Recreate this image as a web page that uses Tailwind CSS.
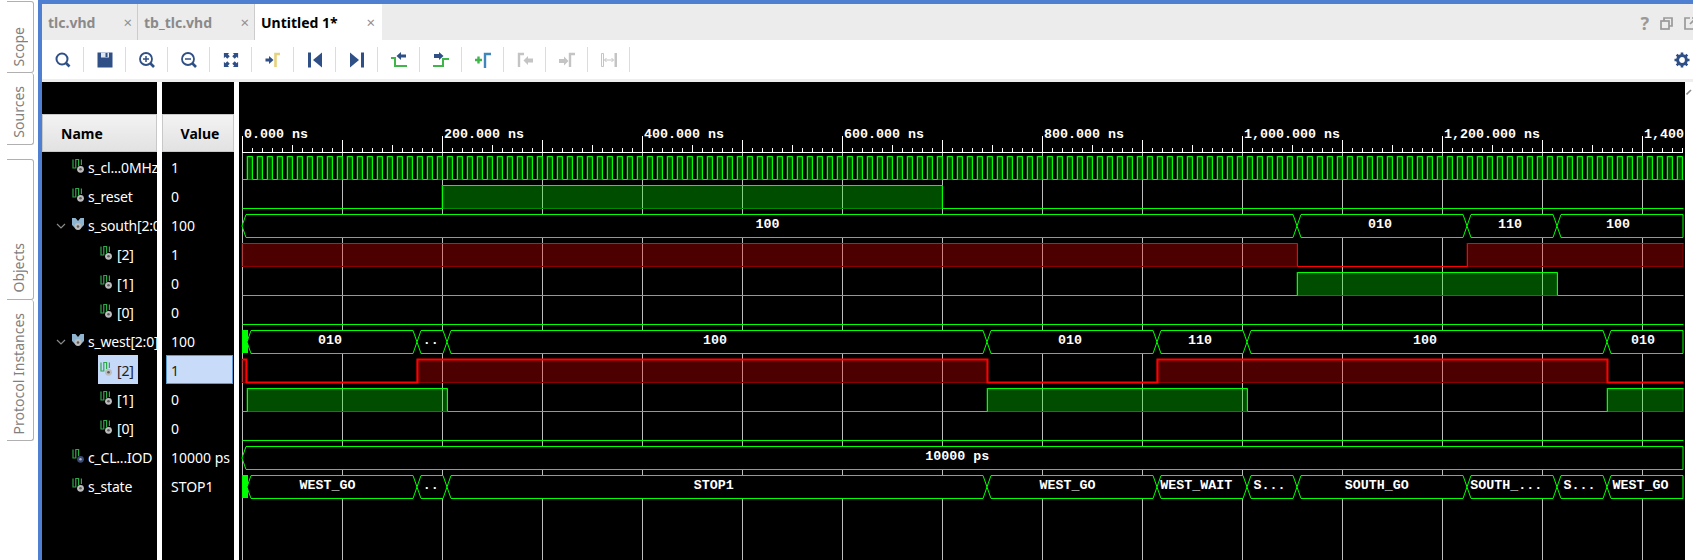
<!DOCTYPE html>
<html lang="en">
<head>
    <meta charset="UTF-8">
    <title>Untitled 1*</title>
    <script src="https://cdn.jsdelivr.net/npm/@tailwindcss/browser@4"></script>
</head>
<body class="bg-white overflow-hidden font-['Noto_Sans',sans-serif]">
    <!-- shared signal icons -->
    <svg class="hidden">
        <symbol id="sig" viewBox="0 0 12 14">
            <path d="M1 0.5V9H3.8V0.5H6.6V7" fill="none" stroke="#2ea84a" stroke-width="1.2"/>
            <path d="M9.4 0.5V6" fill="none" stroke="#2ea84a" stroke-width="1.2"/>
            <circle cx="8.5" cy="10.3" r="3.4" fill="#bdbdbd"/>
            <circle cx="8.5" cy="10.3" r="1.3" fill="#5c5c5c"/>
        </symbol>
        <symbol id="sig-const" viewBox="0 0 12 14">
            <path d="M1 0.5V9H3.8V0.5H6.6V7" fill="none" stroke="#2ea84a" stroke-width="1.2"/>
            <circle cx="8.5" cy="10.3" r="3.4" fill="#3a4a70"/>
            <circle cx="8.5" cy="10.3" r="1.2" fill="#a9b2cc"/>
        </symbol>
        <symbol id="bus" viewBox="0 0 12 14">
            <path d="M0 1H3.5L6 4L8.5 1H12V8L9 11H3L0 8Z" fill="#8fb4cf"/>
            <circle cx="6" cy="9.5" r="3.4" fill="#bdbdbd"/>
            <circle cx="6" cy="9.5" r="1.3" fill="#5c5c5c"/>
        </symbol>
    </svg>

    <div class="flex w-[1693px] h-[560px]">
        <!-- Left vertical tabs -->
        <div class="w-[38px] shrink-0 pt-px pl-[7px] text-[14px] text-[#808080]">
            <div class="w-[27px] h-[72px] flex flex-col justify-end items-center pb-[6px] pr-[2px] border border-l-0 border-[#b0b0b0] rounded-r-[3px]">
                <span class="[writing-mode:vertical-rl] rotate-180 leading-none">Scope</span>
            </div>
            <div class="w-[27px] h-[72px] flex flex-col justify-end items-center pb-[6px] pr-[2px] border border-l-0 border-t-0 border-[#b0b0b0] rounded-r-[3px]">
                <span class="[writing-mode:vertical-rl] rotate-180 leading-none">Sources</span>
            </div>
            <div class="w-[27px] h-[141px] mt-[14px] flex flex-col justify-end items-center pb-[6px] pr-[2px] border border-l-0 border-[#b0b0b0] rounded-r-[3px]">
                <span class="[writing-mode:vertical-rl] rotate-180 leading-none">Objects</span>
            </div>
            <div class="w-[27px] h-[141px] flex flex-col justify-end items-center pb-[6px] pr-[2px] border border-l-0 border-t-0 border-[#b0b0b0] rounded-r-[3px]">
                <span class="[writing-mode:vertical-rl] rotate-180 leading-none whitespace-nowrap">Protocol Instances</span>
            </div>
        </div>

        <!-- Main window -->
        <div class="flex-1 min-w-0 flex flex-col border-t-4 border-l-4 border-[#4e7fd0]">
            <!-- Editor tabs -->
            <div class="h-[36px] shrink-0 flex bg-[#ececec] text-[14px] font-bold overflow-hidden">
                <div class="w-[96px] h-[36px] flex items-center justify-between pl-[6px] pr-[4px] border-r border-[#cccccc] text-[#8a8a8a]">
                    <span>tlc.vhd</span><span class="font-normal text-[15px] text-[#909090] mr-px">×</span>
                </div>
                <div class="w-[117px] h-[36px] flex items-center justify-between pl-[6px] pr-[4px] border-r border-[#cccccc] text-[#8a8a8a]">
                    <span>tb_tlc.vhd</span><span class="font-normal text-[15px] text-[#909090] mr-px">×</span>
                </div>
                <div class="w-[127px] h-[36px] flex items-center justify-between pl-[6px] pr-[6px] bg-white text-black">
                    <span>Untitled 1*</span><span class="font-normal text-[15px] text-[#909090] mr-px">×</span>
                </div>
                <div class="ml-auto flex items-center gap-[11px] -mr-[4px] mt-[2px] text-[#999999]">
                    <span class="text-[18px] font-bold">?</span>
                    <svg width="13" height="13" viewBox="0 0 13 13" fill="none" stroke="#999999" stroke-width="1.7"><path d="M4 4V1H12V9H9"/><rect x="1" y="4" width="8" height="8"/></svg>
                    <svg width="13" height="13" viewBox="0 0 13 13" fill="none" stroke="#999999" stroke-width="1.7"><path d="M6 1H1V12H12V7"/><path d="M6 7L12 1M8 1H12V5"/></svg>
                </div>
            </div>

            <!-- Toolbar -->
            <div class="h-[39px] shrink-0 flex items-center bg-white">
                <div class="w-[42px] h-[25px] flex items-center justify-center border-r border-[#dcdcdc]">
                    <svg width="18" height="18" viewBox="0 0 18 18" fill="none" stroke="#2f4f87"><circle cx="8" cy="8" r="5.5" stroke-width="2"/><path d="M12 12L15.5 15.5" stroke-width="2.6"/></svg>
                </div>
                <div class="w-[42px] h-[25px] flex items-center justify-center border-r border-[#dcdcdc]">
                    <svg width="18" height="18" viewBox="0 0 18 18"><path d="M1.5 1.5H16.5V16.5H1.5Z" fill="#2f4f87"/><path d="M5 1.5H13V6.5H5Z" fill="#dfe6f1"/><path d="M9.5 2H11.5V6H9.5Z" fill="#2f4f87"/></svg>
                </div>
                <div class="w-[42px] h-[25px] flex items-center justify-center border-r border-[#dcdcdc]">
                    <svg width="18" height="18" viewBox="0 0 18 18" fill="none" stroke="#2f4f87"><circle cx="8" cy="8" r="6" stroke-width="1.8"/><path d="M8 5V11M5 8H11" stroke-width="1.5"/><path d="M12.5 12.5L16 16" stroke-width="2.6"/></svg>
                </div>
                <div class="w-[42px] h-[25px] flex items-center justify-center border-r border-[#dcdcdc]">
                    <svg width="18" height="18" viewBox="0 0 18 18" fill="none" stroke="#2f4f87"><circle cx="8" cy="8" r="6" stroke-width="1.8"/><path d="M5 8H11" stroke-width="1.5"/><path d="M12.5 12.5L16 16" stroke-width="2.6"/></svg>
                </div>
                <div class="w-[42px] h-[25px] flex items-center justify-center border-r border-[#dcdcdc]">
                    <svg width="16" height="16" viewBox="0 0 18 18" fill="#2f4f87"><path d="M1 1H7L5.4 2.6L7.6 4.8L4.8 7.6L2.6 5.4L1 7Z"/><path d="M17 1V7L15.4 5.4L13.2 7.6L10.4 4.8L12.6 2.6L11 1Z"/><path d="M1 17V11L2.6 12.6L4.8 10.4L7.6 13.2L5.4 15.4L7 17Z"/><path d="M17 17H11L12.6 15.4L10.4 13.2L13.2 10.4L15.4 12.6L17 11Z"/></svg>
                </div>
                <div class="w-[42px] h-[25px] flex items-center justify-center border-r border-[#dcdcdc]">
                    <svg width="18" height="18" viewBox="0 0 18 18"><path d="M11.5 16V3H16" fill="none" stroke="#e6d27e" stroke-width="2.6"/><path d="M1.5 7.5H5V5L9.5 9L5 13V10.5H1.5Z" fill="#2f4f87"/></svg>
                </div>
                <div class="w-[42px] h-[25px] flex items-center justify-center border-r border-[#dcdcdc]">
                    <svg width="18" height="18" viewBox="0 0 18 18" fill="#2f4f87"><path d="M2 1.5H5V16.5H2Z"/><path d="M16 1.5V16.5L7 9Z"/></svg>
                </div>
                <div class="w-[42px] h-[25px] flex items-center justify-center border-r border-[#dcdcdc]">
                    <svg width="18" height="18" viewBox="0 0 18 18" fill="#2f4f87"><path d="M16 1.5H13V16.5H16Z"/><path d="M2 1.5V16.5L11 9Z"/></svg>
                </div>
                <div class="w-[42px] h-[25px] flex items-center justify-center border-r border-[#dcdcdc]">
                    <svg width="18" height="18" viewBox="0 0 18 18"><path d="M1 7H5V15H17" fill="none" stroke="#3fb54a" stroke-width="2"/><path d="M16 3.5H11V1L6.5 5L11 9V6.5H16Z" fill="#2f4f87"/></svg>
                </div>
                <div class="w-[42px] h-[25px] flex items-center justify-center border-r border-[#dcdcdc]">
                    <svg width="18" height="18" viewBox="0 0 18 18"><path d="M1 15H11V8H17" fill="none" stroke="#3fb54a" stroke-width="2"/><path d="M2 3H7V1L11.5 5L7 9V7H2Z" fill="#2f4f87"/></svg>
                </div>
                <div class="w-[42px] h-[25px] flex items-center justify-center border-r border-[#dcdcdc]">
                    <svg width="18" height="18" viewBox="0 0 18 18"><path d="M11 17V3H17" fill="none" stroke="#3f86bd" stroke-width="2.4"/><path d="M1 9H8M4.5 5.5V12.5" fill="none" stroke="#3fb54a" stroke-width="2.4"/></svg>
                </div>
                <div class="w-[42px] h-[25px] flex items-center justify-center border-r border-[#dcdcdc]">
                    <svg width="18" height="18" viewBox="0 0 18 18"><path d="M3 16V3H8" fill="none" stroke="#c4c4c4" stroke-width="2.4"/><path d="M17 7.5H12V5L7.5 9.5L12 14V11.5H17Z" fill="#c4c4c4"/></svg>
                </div>
                <div class="w-[42px] h-[25px] flex items-center justify-center border-r border-[#dcdcdc]">
                    <svg width="18" height="18" viewBox="0 0 18 18"><path d="M12 16V3H17" fill="none" stroke="#c4c4c4" stroke-width="2.4"/><path d="M1 8H6V5.5L10.5 10L6 14.5V12H1Z" fill="#c4c4c4"/></svg>
                </div>
                <div class="w-[42px] h-[25px] flex items-center justify-center border-r border-[#dcdcdc]">
                    <svg width="18" height="18" viewBox="0 0 18 18"><path d="M1.5 2.5H3.5V15.5H1.5Z" fill="none" stroke="#c4c4c4"/><path d="M14.5 2H17V16H14.5Z" fill="#c4c4c4"/><path d="M4.5 9H13.5M6.5 7L4.5 9L6.5 11M11.5 7L13.5 9L11.5 11" fill="none" stroke="#c4c4c4"/></svg>
                </div>
                <div class="ml-auto mr-[3px]">
                    <svg width="16" height="16" viewBox="0 0 16 16" class="block">
                        <circle cx="8" cy="8" r="4.4" fill="none" stroke="#2f4f87" stroke-width="3"/>
                        <path d="M8 0.5V15.5M0.5 8H15.5M2.7 2.7L13.3 13.3M13.3 2.7L2.7 13.3" stroke="#2f4f87" stroke-width="2.6" stroke-dasharray="3 9 3 0" fill="none"/>
                    </svg>
                </div>
            </div>
            <div class="h-[3px] shrink-0 bg-[#eeeeee]"></div>

            <!-- Wave window -->
            <div class="flex-1 min-h-0 flex">
                <!-- Name column -->
                <div class="w-[115px] shrink-0 bg-black text-white text-[14px] tracking-[-0.2px] overflow-hidden">
                    <div class="h-[32px]"></div>
                    <div class="h-[38px] flex items-center pl-[18px] border border-[#c8c8c8] bg-gradient-to-b from-[#f3f3f3] to-[#e2e2e2] text-black font-bold tracking-normal">Name</div>
                    <div class="h-[29px] pt-[2px] flex items-center pl-[30px] whitespace-nowrap"><svg width="12" height="14" class="shrink-0 mr-[4px] -mt-[3px]"><use href="#sig"/></svg>s_cl...0MHz</div>
                    <div class="h-[29px] pt-[2px] flex items-center pl-[30px] whitespace-nowrap"><svg width="12" height="14" class="shrink-0 mr-[4px] -mt-[3px]"><use href="#sig"/></svg>s_reset</div>
                    <div class="h-[29px] pt-[2px] flex items-center pl-[12px] whitespace-nowrap">
                        <svg width="14" height="14" viewBox="0 0 14 14" class="shrink-0 mr-[4px]" fill="none" stroke="#8a8a8a" stroke-width="1.2"><path d="M3 5L7 9L11 5"/></svg>
                        <svg width="12" height="14" class="shrink-0 mr-[4px] -mt-[3px]"><use href="#bus"/></svg>s_south[2:0]
                    </div>
                    <div class="h-[29px] pt-[2px] flex items-center pl-[58px] whitespace-nowrap"><svg width="12" height="14" class="shrink-0 mr-[5px] -mt-[3px]"><use href="#sig"/></svg>[2]</div>
                    <div class="h-[29px] pt-[2px] flex items-center pl-[58px] whitespace-nowrap"><svg width="12" height="14" class="shrink-0 mr-[5px] -mt-[3px]"><use href="#sig"/></svg>[1]</div>
                    <div class="h-[29px] pt-[2px] flex items-center pl-[58px] whitespace-nowrap"><svg width="12" height="14" class="shrink-0 mr-[5px] -mt-[3px]"><use href="#sig"/></svg>[0]</div>
                    <div class="h-[29px] pt-[2px] flex items-center pl-[12px] whitespace-nowrap">
                        <svg width="14" height="14" viewBox="0 0 14 14" class="shrink-0 mr-[4px]" fill="none" stroke="#8a8a8a" stroke-width="1.2"><path d="M3 5L7 9L11 5"/></svg>
                        <svg width="12" height="14" class="shrink-0 mr-[4px] -mt-[3px]"><use href="#bus"/></svg>s_west[2:0]
                    </div>
                    <div class="h-[29px] flex items-center pl-[58px] whitespace-nowrap">
                        <div class="w-[40px] h-[29px] pt-[2px] -ml-[2px] pl-[2px] flex items-center bg-[#c5d9f8] text-[#222222]"><svg width="12" height="14" class="shrink-0 mr-[5px] -mt-[3px]"><use href="#sig"/></svg>[2]</div>
                    </div>
                    <div class="h-[29px] pt-[2px] flex items-center pl-[58px] whitespace-nowrap"><svg width="12" height="14" class="shrink-0 mr-[5px] -mt-[3px]"><use href="#sig"/></svg>[1]</div>
                    <div class="h-[29px] pt-[2px] flex items-center pl-[58px] whitespace-nowrap"><svg width="12" height="14" class="shrink-0 mr-[5px] -mt-[3px]"><use href="#sig"/></svg>[0]</div>
                    <div class="h-[29px] pt-[2px] flex items-center pl-[30px] whitespace-nowrap"><svg width="12" height="14" class="shrink-0 mr-[4px] -mt-[3px]"><use href="#sig-const"/></svg>c_CL...IOD</div>
                    <div class="h-[29px] pt-[2px] flex items-center pl-[30px] whitespace-nowrap"><svg width="12" height="14" class="shrink-0 mr-[4px] -mt-[3px]"><use href="#sig"/></svg>s_state</div>
                </div>
                <div class="w-[5px] shrink-0 bg-white"></div>

                <!-- Value column -->
                <div class="w-[72px] shrink-0 bg-black text-white text-[14px] overflow-hidden">
                    <div class="h-[32px]"></div>
                    <div class="h-[38px] flex items-center justify-center pl-[4px] border border-[#c8c8c8] bg-gradient-to-b from-[#f3f3f3] to-[#e2e2e2] text-black font-bold">Value</div>
                    <div class="h-[29px] pt-[2px] flex items-center pl-[9px]">1</div>
                    <div class="h-[29px] pt-[2px] flex items-center pl-[9px]">0</div>
                    <div class="h-[29px] pt-[2px] flex items-center pl-[9px]">100</div>
                    <div class="h-[29px] pt-[2px] flex items-center pl-[9px]">1</div>
                    <div class="h-[29px] pt-[2px] flex items-center pl-[9px]">0</div>
                    <div class="h-[29px] pt-[2px] flex items-center pl-[9px]">0</div>
                    <div class="h-[29px] pt-[2px] flex items-center pl-[9px]">100</div>
                    <div class="h-[29px] pt-[2px] ml-[4px] mr-px pl-[4px] flex items-center bg-[#c8dcfa] border border-[#5a9bd5] text-[#222222]">1</div>
                    <div class="h-[29px] pt-[2px] flex items-center pl-[9px]">0</div>
                    <div class="h-[29px] pt-[2px] flex items-center pl-[9px]">0</div>
                    <div class="h-[29px] pt-[2px] flex items-center pl-[9px] whitespace-nowrap">10000 ps</div>
                    <div class="h-[29px] pt-[2px] flex items-center pl-[9px]">STOP1</div>
                </div>
                <div class="w-[5px] shrink-0 bg-white"></div>

                <!-- Waveforms, coordinates in the svg are page pixels -->
                <svg id="wave" width="1446" height="478" viewBox="239 82 1446 478" class="shrink-0 block bg-black"></svg>

                <!-- Scrollbar -->
                <div class="flex-1 bg-white pt-[6px] pl-px">
                    <svg width="7" height="8" viewBox="0 0 7 8" fill="none" stroke="#8a8a8a" stroke-width="1.6" class="block"><path d="M0.5 6.5L5 2"/></svg>
                </div>
            </div>
        </div>
    </div>

    <script>
        // Tiempo 0 en x=242, 1 ns = 1 px. Cada fila mide 29 px y la forma 23.
        const X0 = 242, XEND = 1683;
        const rowTop = (n) => 156 + 29 * n;
        const GREEN = '#00ff00', RED = '#ff0000';
        let out = '';

        // Grid
        for (let x = X0; x <= 1642; x += 100) {
            out += `<path d="M${x + 0.5} 152V560" stroke="#bdbdbd" stroke-width="1"/>`;
        }

        // Ruler
        out += `<path d="M${X0} 152.5H${XEND}" stroke="#fff"/>`;
        for (let i = 0; X0 + i * 10 <= XEND; i++) {
            const x = X0 + i * 10 + 0.5;
            let top = 148;
            if (i % 20 === 0) top = 136;
            else if (i % 10 === 0) top = 140;
            else if (i % 5 === 0) top = 145;
            out += `<path d="M${x} ${top}V152" stroke="#fff"/>`;
        }
        const labels = ['0.000 ns', '200.000 ns', '400.000 ns', '600.000 ns', '800.000 ns', '1,000.000 ns', '1,200.000 ns', '1,400 ns'];
        labels.forEach((t, i) => {
            out += txt(X0 + 2 + i * 200, 138, t, 'start');
        });

        function txt(x, y, t, anchor) {
            return `<text x="${x}" y="${y}" text-anchor="${anchor}" fill="#fff" font-family="'Liberation Mono', monospace" font-weight="700" font-size="13.33" xml:space="preserve">${t}</text>`;
        }

        // Señal de 1 bit: flips = tiempos (en px) donde cambia de nivel
        function bit(row, color, start, flips, width) {
            const top = rowTop(row) + 0.5, bot = rowTop(row) + 23.5;
            const pts = [X0, ...flips, XEND];
            const dim = color === RED ? '#8a0000' : '#008a00';
            const fill = color === RED ? 'rgba(255,0,0,0.3)' : 'rgba(0,255,0,0.3)';
            let level = start, d = '';
            for (let i = 0; i < pts.length - 1; i++) {
                const a = pts[i], b = pts[i + 1];
                if (level) {
                    out += `<rect x="${a}" y="${top}" width="${b - a}" height="23" fill="${fill}" stroke="${dim}"/>`;
                }
                d += `${i === 0 ? 'M' : 'L'}${a + 0.5} ${level ? top : bot}L${b + 0.5} ${level ? top : bot}`;
                level = !level;
            }
            out += `<path d="${d}" fill="none" stroke="${color}" stroke-width="${width || 1}"/>`;
        }

        // Bus: segs = [inicio, fin, texto]; el texto del original cae algo a la izquierda del centro
        function bus(row, segs) {
            const top = rowTop(row) + 0.5, bot = rowTop(row) + 23.5, mid = rowTop(row) + 12;
            segs.forEach(([a, b, t]) => {
                const open = b >= XEND;
                const right = open ? `L${b} ${top}L${b} ${bot}` : `L${b - 4} ${top}L${b} ${mid}L${b - 4} ${bot}`;
                out += `<path d="M${a} ${mid}L${a + 4} ${top}${right}L${a + 4} ${bot}Z" fill="#000" stroke="${GREEN}"/>`;
                out += txt((a + b) / 2 - 0.65 * t.length, rowTop(row) + 14, t, 'middle');
            });
        }

        // Reloj
        const clk = [];
        for (let x = 247; x < XEND; x += 5) clk.push(x);
        bit(0, GREEN, false, clk);

        bit(1, GREEN, false, [442, 942]);
        bus(2, [[242, 1297, '100'], [1297, 1467, '010'], [1467, 1557, '110'], [1557, XEND, '100']]);
        bit(3, RED, true, [1297, 1467]);
        bit(4, GREEN, false, [1297, 1557]);
        bit(5, GREEN, false, []);

        out += `<rect x="242" y="${rowTop(6)}" width="6" height="23" fill="${GREEN}"/>`;
        bus(6, [[247, 417, '010'], [417, 447, '..'], [447, 987, '100'], [987, 1157, '010'], [1157, 1247, '110'], [1247, 1607, '100'], [1607, XEND, '010']]);
        bit(7, RED, true, [246, 417, 987, 1157, 1607], 2);
        bit(8, GREEN, false, [247, 447, 987, 1247, 1607]);
        bit(9, GREEN, false, []);
        bus(10, [[242, XEND, '10000 ps']]);

        out += `<rect x="242" y="${rowTop(11)}" width="6" height="23" fill="${GREEN}"/>`;
        bus(11, [[247, 417, 'WEST_GO'], [417, 447, '..'], [447, 987, 'STOP1'], [987, 1157, 'WEST_GO'], [1157, 1247, 'WEST_WAIT'], [1247, 1297, 'S...'], [1297, 1467, 'SOUTH_GO'], [1467, 1557, 'SOUTH_...'], [1557, 1607, 'S...'], [1607, XEND, 'WEST_GO']]);

        document.getElementById('wave').innerHTML = out;
    </script>
</body>
</html>
